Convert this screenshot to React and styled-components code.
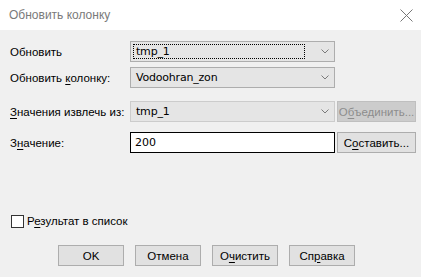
import React from 'react';
import styled, { createGlobalStyle } from 'styled-components';

const Global = createGlobalStyle`
    html, body {
        margin: 0;
        padding: 0;
        background: #f0f0f0;
    }
    body {
        font-family: "Liberation Sans", Arial, sans-serif;
        font-size: 11px;
        color: #000;
    }
`;

const Window = styled.div`
    width: 421px;
    height: 277px;
    background: #f0f0f0;
    display: flex;
    flex-direction: column;
    overflow: hidden;
`;

const TitleBar = styled.div`
    height: 30px;
    background: #fff;
    display: flex;
    align-items: center;
    justify-content: space-between;
    padding: 0 8px 0 9px;
`;

const Title = styled.div`
    font-size: 12px;
    color: #7a7a7a;
`;

const Body = styled.div`
    flex: 1;
    display: flex;
    flex-direction: column;
    padding: 11px 7px 0 10px;
`;

const Row = styled.div`
    display: grid;
    grid-template-columns: 118px 205px 79px;
    column-gap: 2px;
    align-items: center;
    height: 21px;
    margin-top: ${props => props.gap || 0}px;
`;

const Label = styled.div`
    font-size: 11.5px;
    white-space: nowrap;
`;

const U = styled.span`
    text-decoration: underline;
    text-underline-offset: 2px;
`;

const Combo = styled.div`
    height: 21px;
    box-sizing: border-box;
    border: 1px solid ${props => props.disabled ? '#cccccc' : '#adadad'};
    background: #e5e5e5;
    display: flex;
    align-items: center;
    padding: 2px;
    font-family: "DejaVu Sans", "Noto Sans", sans-serif;
    font-size: 11px;
`;

const ComboText = styled.div`
    flex: 1;
    height: 15px;
    display: flex;
    align-items: center;
    padding-left: 2px;
    margin-right: 16px;
    box-sizing: border-box;
    border: 1px dotted ${props => props.focused ? '#000' : 'transparent'};
    letter-spacing: -0.2px;
`;

const Chevron = styled.svg`
    width: 8px;
    height: 5px;
    margin-right: 3px;
`;

const TextBox = styled.div`
    height: 21px;
    box-sizing: border-box;
    border: 1px solid #000;
    background: #fff;
    display: flex;
    align-items: center;
    padding-left: 4px;
    font-family: "DejaVu Sans", "Noto Sans", sans-serif;
    font-size: 11px;
`;

const Button = styled.div`
    height: 21px;
    box-sizing: border-box;
    border: 1px solid ${props => props.disabled ? '#bfbfbf' : '#adadad'};
    background: ${props => props.disabled ? '#cccccc' : '#e1e1e1'};
    color: ${props => props.disabled ? '#8d8d8d' : '#000'};
    display: flex;
    align-items: center;
    justify-content: center;
    font-size: 11.5px;
    white-space: nowrap;
`;

const CheckRow = styled.div`
    display: flex;
    align-items: center;
    margin-top: 61px;
    margin-left: 1px;
    height: 14px;
`;

const CheckBox = styled.div`
    width: 13px;
    height: 13px;
    box-sizing: border-box;
    border: 1px solid #333;
    background: #fff;
    margin-right: 3px;
`;

const Footer = styled.div`
    display: flex;
    gap: 11px;
    margin-top: 17px;
    padding-left: 48px;
`;

const FooterButton = styled(Button)`
    width: 66px;
`;

const Arrow = () => (
    <Chevron viewBox="0 0 8 5">
        <path d="M0.5 0.5 L4 4 L7.5 0.5" fill="none" stroke="#7a7a7a" strokeWidth="1" />
    </Chevron>
);

const App = () => {
    return (
        <Window>
            <Global />
            <TitleBar>
                <Title>Обновить колонку</Title>
                <svg width="13" height="13" viewBox="0 0 13 13">
                    <path d="M0.5 0.5 L12.5 12.5 M12.5 0.5 L0.5 12.5" stroke="#777" strokeWidth="1" />
                </svg>
            </TitleBar>
            <Body>
                <Row>
                    <Label>Обновить</Label>
                    <Combo>
                        <ComboText focused>tmp_1</ComboText>
                        <Arrow />
                    </Combo>
                </Row>
                <Row gap={5}>
                    <Label>Обновить <U>к</U>олонку:</Label>
                    <Combo>
                        <ComboText>Vodoohran_zon</ComboText>
                        <Arrow />
                    </Combo>
                </Row>
                <Row gap={13}>
                    <Label><U>З</U>начения извлечь из:</Label>
                    <Combo disabled>
                        <ComboText>tmp_1</ComboText>
                        <Arrow />
                    </Combo>
                    <Button disabled>О<U>б</U>ъединить...</Button>
                </Row>
                <Row gap={10}>
                    <Label>З<U>н</U>ачение:</Label>
                    <TextBox>200</TextBox>
                    <Button>С<U>о</U>ставить...</Button>
                </Row>
                <CheckRow>
                    <CheckBox />
                    <Label>Р<U>е</U>зультат в список</Label>
                </CheckRow>
                <Footer>
                    <FooterButton>OK</FooterButton>
                    <FooterButton>Отмена</FooterButton>
                    <FooterButton>О<U>ч</U>истить</FooterButton>
                    <FooterButton>Сп<U>р</U>авка</FooterButton>
                </Footer>
            </Body>
        </Window>
    );
};

export default App;
